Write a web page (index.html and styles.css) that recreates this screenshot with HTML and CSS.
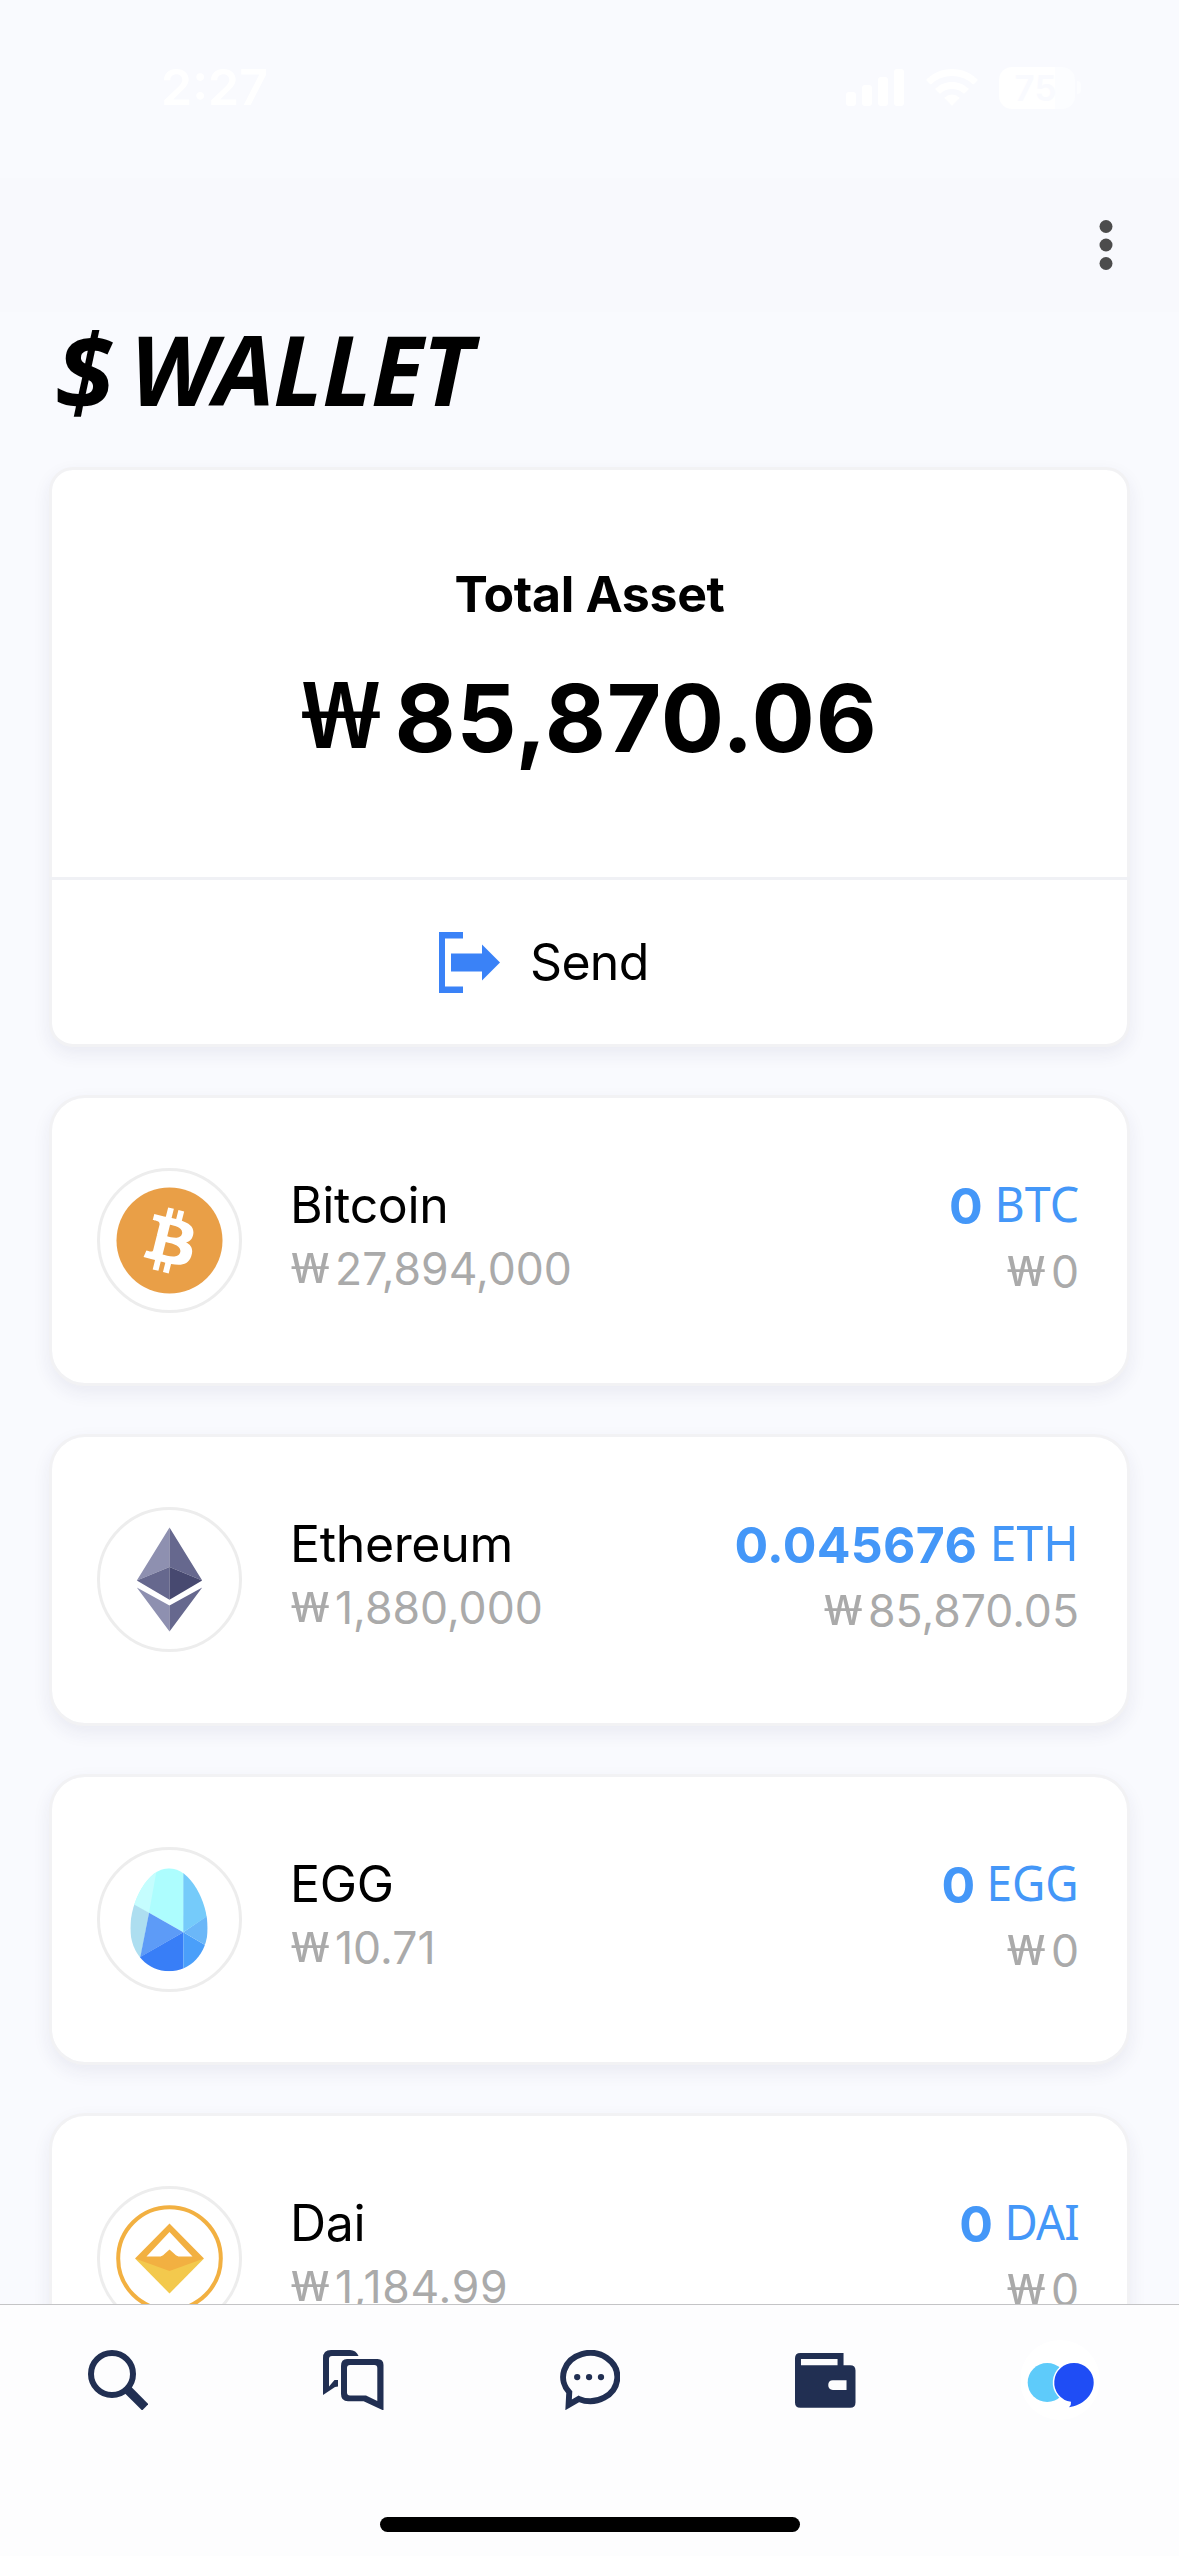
FILE: index.html
```
<!DOCTYPE html>
<html lang="en">
<head>
<meta charset="utf-8">
<title>Wallet</title>
<link rel="stylesheet" href="styles.css">
</head>
<body>
<header class="status">
  <span class="time">2:27</span>
  <div class="indicators">
    <svg class="signal" viewBox="0 0 58 37"><rect y="23" width="10" height="14" rx="3"/><rect x="16" y="16" width="10" height="21" rx="3"/><rect x="32" y="8" width="10" height="29" rx="3"/><rect x="48" width="10" height="37" rx="3"/></svg>
    <svg class="wifi" viewBox="0 0 52 37"><path d="M26 0C36 0 45 4 51.300 10.300Q52 11 51.300 11.700L48 15Q47.300 15.700 46.500 15A30 30 0 0 0 5.500 15Q4.700 15.700 4 15L.7 11.700Q0 11 .7 10.300C7 4 16 0 26 0ZM26 13C32.500 13 38 15.300 42.300 19.300Q43 20 42.300 20.700L38.700 24.200Q38 24.900 37.200 24.200A17 17 0 0 0 14.800 24.200Q14 24.900 13.300 24.200L9.700 20.700Q9 20 9.700 19.300C14 15.300 19.500 13 26 13ZM26 25.500Q30 25.500 33.200 28.200 33.900 28.900 33.200 29.600L26.700 36.300Q26 37 25.300 36.300L18.800 29.600Q18.100 28.900 18.800 28.200 22 25.500 26 25.500Z"/></svg>
    <div class="battery"><span>75</span></div>
    <i class="nub"></i>
  </div>
</header>
<div class="toolbar">
  <svg class="more" viewBox="0 0 14 50"><circle cx="7" cy="6.500" r="6.500"/><circle cx="7" cy="25" r="6.500"/><circle cx="7" cy="43.500" r="6.500"/></svg>
</div>
<main>
  <h1><span class="dollar">$</span><span class="word">WALLET</span></h1>
  <section class="total">
    <h2>Total Asset</h2>
    <p class="amount"><span class="won">₩</span>85,870.06</p>
    <div class="send">
      <svg viewBox="0 0 61 61"><path d="M0 0H24V6.500H6V54.500H24V61H0ZM12 21.500H43V12.500L61 30.500 43 48.500V39.500H12Z"/></svg>
      <span>Send</span>
    </div>
  </section>

  <article class="coin">
    <div class="badge"><svg viewBox="-69.500 -69.500 139 139"><circle r="53" fill="#e99f47"/><path fill="#fff" transform="scale(3.31) translate(-16 -16)" d="M23.189 14.02c.314-2.096-1.283-3.223-3.465-3.975l.708-2.84-1.728-.43-.69 2.765c-.454-.114-.92-.22-1.385-.326l.695-2.783L15.596 6l-.708 2.839c-.376-.086-.746-.17-1.104-.26l.002-.009-2.384-.595-.46 1.846s1.283.294 1.256.312c.7.175.826.638.805 1.006l-.806 3.235c.048.012.11.03.18.057l-.183-.045-1.13 4.532c-.086.212-.303.531-.793.41.018.025-1.256-.313-1.256-.313l-.858 1.978 2.25.561c.418.105.828.215 1.231.318l-.715 2.872 1.727.43.708-2.84c.472.127.93.245 1.378.357l-.706 2.828 1.728.43.715-2.866c2.948.558 5.164.333 6.097-2.333.752-2.146-.037-3.385-1.588-4.192 1.13-.26 1.98-1.003 2.207-2.538zm-3.95 5.538c-.533 2.147-4.148.986-5.32.695l.95-3.805c1.172.293 4.929.872 4.37 3.11zm.535-5.569c-.487 1.953-3.495.96-4.47.717l.86-3.45c.975.243 4.118.696 3.61 2.733z"/></svg></div>
    <div class="info"><h3>Bitcoin</h3><p><span class="won">₩</span>27,894,000</p></div>
    <div class="holding"><p class="balance"><b>0</b><span class="ticker btc">BTC</span></p><p class="value"><span class="won">₩</span>0</p></div>
  </article>

  <article class="coin">
    <div class="badge"><svg viewBox="-69.500 -69.500 139 139"><path fill="#8e90b0" d="M0-52V-12.500L-32.700 1ZM0 26V52L-32.700 8Z"/><path fill="#66688e" d="M0-52V-12.500L32.700 1ZM0 26V52L32.700 8ZM0-12.500V20.300L-32.700 1Z"/><path fill="#474970" d="M0-12.500V20.300L32.700 1Z"/></svg></div>
    <div class="info"><h3>Ethereum</h3><p><span class="won">₩</span>1,880,000</p></div>
    <div class="holding"><p class="balance"><b>0.045676</b><span class="ticker eth">ETH</span></p><p class="value"><span class="won">₩</span>85,870.05</p></div>
  </article>

  <article class="coin">
    <div class="badge"><svg viewBox="31 27 417 417">
      <defs><clipPath id="egg"><path d="M238 82C302 82 354 182 354 262C354 340 300 391 238 391S122 340 122 262C122 182 174 82 238 82Z"/></clipPath></defs>
      <g clip-path="url(#egg)"><path fill="#adfdfe" d="M120 70H282V274L178 215 120 184Z"/><path fill="#c5fdfe" d="M120 70H204L178 215 120 184Z"/><path fill="#addef0" d="M120 183L178 215 153 348 110 374Z"/><path fill="#5d9bf7" d="M178 215L281 274 152 348Z"/><path fill="#387ef7" d="M281 274V400H120V366Z"/><path fill="#4a9ffa" d="M281 274V400H370V326Z"/><path fill="#6bb7f8" d="M281 274L370 326V212Z"/><path fill="#75cbfa" d="M281 70V274L370 214V70Z"/></g>
    </svg></div>
    <div class="info"><h3>EGG</h3><p><span class="won">₩</span>10.71</p></div>
    <div class="holding"><p class="balance"><b>0</b><span class="ticker egg">EGG</span></p><p class="value"><span class="won">₩</span>0</p></div>
  </article>

  <article class="coin">
    <div class="badge"><svg viewBox="-69.500 -69.500 139 139"><circle r="51.300" fill="none" stroke="#f2b041" stroke-width="4"/><path fill="#f3c94d" d="M-34.500 0L0 35 34.500 0Z"/><path fill="#f2b041" fill-rule="evenodd" d="M0-35L34.500 0 0 12.500-34.500 0ZM0-26.500L-23-2H-9Q-6-3-4.500-5L0-9 4.500-5Q6-3 9-2H23Z"/></svg></div>
    <div class="info"><h3>Dai</h3><p class="wide"><span class="won">₩</span>1,184.99</p></div>
    <div class="holding"><p class="balance"><b>0</b><span class="ticker dai">DAI</span></p><p class="value"><span class="won">₩</span>0</p></div>
  </article>
</main>
<nav>
  <div class="tabs">
    <svg class="tab" viewBox="0 0 60.500 60.500"><circle cx="24" cy="24" r="21" fill="none" stroke="#212f52" stroke-width="6"/><path d="M39 39L57.300 57.300" stroke="#212f52" stroke-width="9"/></svg>
    <svg class="tab" viewBox="0 0 60.500 60.500"><path fill="#212f52" d="M0 45V8Q0 0 8 0H27Q33 0 35.600 6H9Q6 6 6 9V36.500L11.500 30H15V36.500L12 37ZM24 9H54.500Q60.500 9 60.500 15V60.500L40.600 51.300H25Q18 51.300 18 44V16Q18 9 24 9ZM27 15Q24 15 24 18V42.500Q24 45.500 27 45.500H43L54.300 51V18Q54.300 15 51.300 15Z"/></svg>
    <svg class="tab" viewBox="57 60 183 183"><path fill="none" stroke="#212f52" stroke-width="18" stroke-miterlimit="8" d="M88 188A82 73 0 1 1 117 208L86 226Z"/><g fill="#212f52"><circle cx="112" cy="142" r="9.500"/><circle cx="148" cy="142" r="9.500"/><circle cx="184" cy="142" r="9.500"/></g></svg>
    <svg class="tab" viewBox="765 60 182 182"><path fill="#212f52" fill-rule="evenodd" d="M781 69H911V106H931Q947 106 947 122V218Q947 234 931 234H781Q765 234 765 218V85Q765 69 781 69ZM783 87V106H893V87ZM879 151Q865 151 865 165.500T879 180H920V151Z"/></svg>
    <svg class="logo" viewBox="1021 2340 80 80"><circle cx="1060" cy="2380" r="40" fill="#fff"/><circle cx="1047.200" cy="2382.500" r="19.500" fill="#5ecbfa"/><path fill="#1f4df5" stroke="#fff" stroke-width="3" paint-order="stroke" d="M1074.200 2363A19.500 19.500 0 0 1 1093.700 2382.500C1093.700 2396 1082 2405.500 1069 2407.300Q1071.500 2405 1071 2401.800A19.500 19.500 0 0 1 1074.200 2363Z"/></svg>
  </div>
  <div class="home"></div>
</nav>
</body>
</html>
```
FILE: styles.css
```
* { box-sizing: border-box; margin: 0; padding: 0; }
body { display: flex; flex-direction: column; width: 1179px; height: 2556px; overflow: hidden; background: #f9fafe; color: #000; font-family: Inter, sans-serif; }
svg { display: block; flex: none; }

.status { display: flex; justify-content: space-between; flex: none; height: 178px; padding: 57px 98px 0 161px; color: #fff; }
.time { font-size: 50px; font-weight: 600; line-height: 61px; }
.indicators { display: flex; height: 61px; align-items: center; fill: #fff; }
.signal { width: 58px; height: 37px; }
.wifi { width: 52px; height: 37px; margin-left: 22px; }
.battery { display: flex; align-items: center; justify-content: center; width: 76px; height: 42px; margin-left: 21px; border-radius: 13px; background: linear-gradient(90deg, #fff 56px, #fcfdff 56px); color: #f9fafe; font-size: 35px; font-weight: 600; line-height: 42px; }
.battery span { margin-right: 3px; }
.nub { width: 4px; height: 13px; margin-left: 2px; border-radius: 0 6px 6px 0; background: #fcfdff; }

.toolbar { display: flex; justify-content: flex-end; align-items: center; flex: none; height: 134px; padding-right: 66px; background: #f8f9fd; }
.more { width: 14px; height: 50px; fill: #4c4c4c; }

main { flex: 1; min-height: 0; overflow: hidden; padding: 0 49px; }
h1 { display: flex; align-items: baseline; height: 155px; padding-left: 6px; font: italic 700 96px/106px "Noto Sans", sans-serif; }
.dollar { width: 75px; font-size: 106px; transform: translateY(5px); }
.word { letter-spacing: -0.9px; }

.total, .coin { border: 3px solid #f2f2f4; background: #fff; background-clip: padding-box; box-shadow: 0 7px 18px rgba(40, 45, 95, .075); }
.total { height: 580px; border-radius: 24px; }
h2 { margin-top: 94px; text-align: center; font-size: 50px; font-weight: 700; line-height: 60px; letter-spacing: -.35px; }
.won { display: inline-block; font-family: "Noto Sans", sans-serif; transform-origin: left; letter-spacing: 0; }
.amount { display: flex; justify-content: center; align-items: baseline; height: 215px; padding-top: 36px; font-size: 94px; font-weight: 700; line-height: 114px; letter-spacing: .8px; }
.amount .won { width: 93px; font-size: 92px; font-weight: 600; transform: translateY(-4px) scaleX(1.22); }
.send { display: flex; align-items: center; height: 167px; margin: 38px -3px 0; padding-left: 390px; border-top: 3px solid #f0f1f5; font-size: 50px; line-height: 60px; letter-spacing: -.7px; }
.send svg { width: 61px; height: 61px; margin-right: 30px; fill: #3a82f7; }

.coin { display: flex; align-items: flex-start; height: 291.33px; margin-top: 48px; padding: 70px 48px 0 45px; border-radius: 36px; }
.badge { flex: none; width: 145px; height: 145px; border: 3px solid #ededed; border-radius: 50%; }
.badge svg { width: 139px; height: 139px; }
.info { margin: 7px 0 0 48px; }
h3 { font-size: 50px; font-weight: 400; line-height: 60px; letter-spacing: -.35px; }
.info p, .value { display: flex; align-items: baseline; height: 54px; margin-top: 7px; color: #aaa; font-size: 44.5px; line-height: 54px; }
.info .won, .value .won { width: 44px; font-size: 42px; transform: translateY(-2px) scaleX(1.36); }
.info p { padding-left: 1px; }
.info .wide { letter-spacing: .7px; }
.holding { display: flex; flex-direction: column; align-items: flex-end; margin: 7px 0 0 auto; }
.balance { display: flex; align-items: baseline; height: 60px; color: #4497f8; font-size: 50px; line-height: 60px; letter-spacing: .3px; }
.value { margin-top: 10px; }
.ticker { margin-left: 7px; font: 49px/60px "Noto Sans", sans-serif; letter-spacing: 0; transform: translateY(-2px) scaleX(.95); transform-origin: right; }
.eth { margin-left: 11px; transform: translateY(-2px) scaleX(.98); }
.egg { margin-left: 5px; transform: translateY(-2px) scaleX(.935); }
.dai { margin-left: 6px; letter-spacing: -1px; transform: translateY(-2px) scaleX(.93); }

nav { display: flex; flex-direction: column; align-items: center; flex: none; height: 252px; border-top: 1px solid #c4c4c6; background: #fdfdfe; }
.tabs { display: grid; grid-template-columns: repeat(5, 1fr); place-items: center; width: 100%; height: 150px; }
.tab { width: 60.500px; height: 60.500px; }
.logo { width: 80px; height: 80px; }
.home { width: 420px; height: 15px; margin-top: 62px; border-radius: 8px; background: #000; }
```
